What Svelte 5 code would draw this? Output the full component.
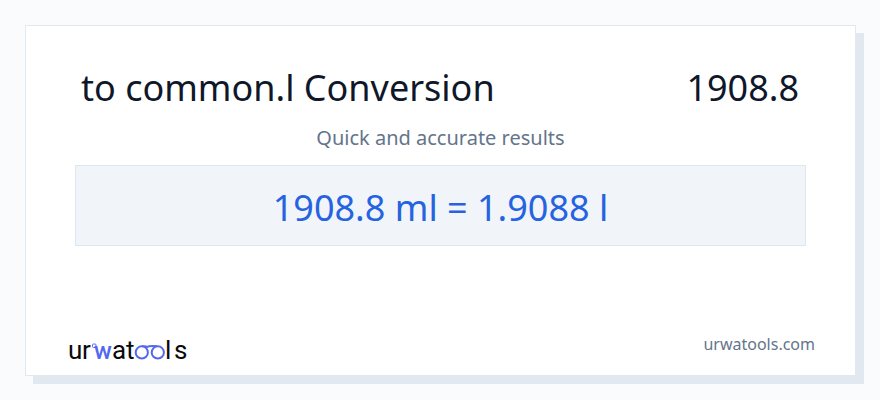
<script>
    let value = 1908.8;
    let unit = "ml";
    let title = "to common.l Conversion";
    let converted = `${value / 1000} l`;
</script>

<main class="page">
    <section class="card">
        <h1 class="title">
            <span>{title}</span>
            <span>{value}</span>
        </h1>
        <p class="subtitle">Quick and accurate results</p>
        <div class="result">{value} {unit} = {converted}</div>
        <footer class="footer">
            <svg class="logo" width="124" height="40" viewBox="0 0 124 40" role="img" aria-label="urwatools">
                <g class="dark">
                    <text x="2 16" y="32">ur</text>
                    <text x="46 60" y="32">at</text>
                    <text x="99 108" y="32">ls</text>
                </g>
                <text class="blue" x="28" y="32">w</text>
                <!-- glasses -->
                <g class="lines">
                    <rect class="dot" x="26.5" y="17" width="3.5" height="3.5" rx="1" />
                    <circle cx="75.8" cy="25.4" r="6.1" />
                    <circle cx="91.8" cy="25.4" r="6.1" />
                    <path d="M76 19.3 Q80 19 82 20.4 M91 19.3 Q84 18.4 80.5 20.2" />
                </g>
            </svg>
            <span class="site">urwatools.com</span>
        </footer>
    </section>
</main>

<style>
    :global(body) {
        background-color: #fafbfd;
        font-family: "Noto Sans", "Open Sans", sans-serif;
    }
    .page {
        box-sizing: border-box;
        min-height: 100vh;
        padding: 25px 24px 24px 25px;
        display: flex;
    }
    .card {
        box-sizing: border-box;
        flex: 1;
        display: flex;
        flex-direction: column;
        padding: 38px 40px 8px;
        background-color: #fff;
        border: 1px solid #e2e8f0;
        box-shadow: 8px 8px 0 #e2e8f0;
    }
    .title {
        display: flex;
        justify-content: space-between;
        margin: 0;
        padding: 0 16px 0 15px;
        color: #0f172a;
        font-size: 36px;
        font-weight: 400;
        line-height: 48px;
    }
    .subtitle {
        margin: 12px 0 13px;
        color: #64748b;
        font-size: 20px;
        line-height: 28px;
        text-align: center;
    }
    .result {
        margin: 0 9px;
        padding: 18px 0 13px;
        background-color: #f1f5f9;
        border: 1px solid #dde7f0;
        color: #2563e0;
        font-size: 36px;
        line-height: 48px;
        text-align: center;
    }
    .footer {
        display: flex;
        justify-content: space-between;
        margin-top: auto;
    }
    .logo {
        font-family: Roboto, sans-serif;
        font-size: 26px;
    }
    .dark {
        fill: #0a0a0a;
    }
    .blue {
        fill: #5468ee;
        font-weight: 500;
        font-size: 24px;
    }
    .lines {
        fill: none;
        stroke: #5468ee;
        stroke-width: 2;
    }
    .dot {
        stroke-width: 1;
    }
    .site {
        color: #64748b;
        font-size: 16px;
        line-height: 34px;
    }
</style>
